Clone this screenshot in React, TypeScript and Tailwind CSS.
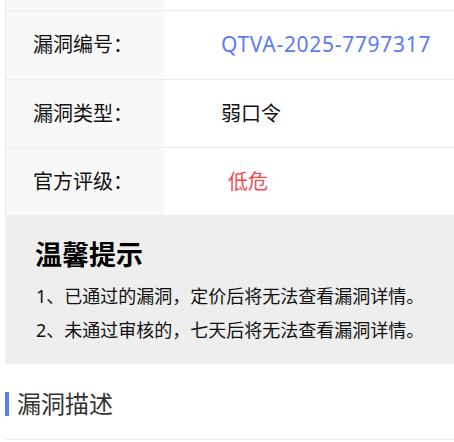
import React from "react";

const Row = ({ label, children, first }: { label: string; children: React.ReactNode; first?: boolean }) => (
  <div className={`flex border-t border-[#ececec] ${first ? "h-[69px]" : "h-[68px]"}`}>
    <div className="w-[158px] shrink-0 bg-[#f8f8f8] flex items-center pl-[27px] text-[20px] text-[#111]">
      {label}
    </div>
    <div className="flex-1 flex items-center pl-[57px] text-[20px]">{children}</div>
  </div>
);

export default function App() {
  return (
    <div className="w-[454px] h-[442px] bg-white pl-[5px] overflow-hidden font-['Noto_Sans','Noto_Sans_CJK_SC',sans-serif]">
      <div className="border-l border-[#ececec]">
        <div className="flex h-[10px]">
          <div className="w-[158px] bg-[#f8f8f8]" />
          <div className="flex-1" />
        </div>
        <Row label="漏洞编号：" first>
          <span className="text-[#5b7bf7] text-[21px] tracking-[0.7px]">QTVA-2025-7797317</span>
        </Row>
        <Row label="漏洞类型：">
          <span className="text-[#111]">弱口令</span>
        </Row>
        <Row label="官方评级：">
          <span className="text-[#f5484f] ml-[7px]">低危</span>
        </Row>
      </div>
      <div className="bg-[#eeeeee] pt-[23px] pb-[17px] pl-[30px]">
        <div className="text-[27px] leading-[34px] font-bold text-black">温馨提示</div>
        <div className="mt-[7px] pl-[1px] text-[18px] leading-[34px] text-[#111]">1、已通过的漏洞，定价后将无法查看漏洞详情。</div>
        <div className="pl-[1px] text-[18px] leading-[34px] text-[#111]">2、未通过审核的，七天后将无法查看漏洞详情。</div>
      </div>
      <div className="pt-[28px] pb-[23px] border-b border-[#ececec] flex items-center">
        <div className="w-[4px] h-[24px] bg-[#5b7bf7]" />
        <div className="ml-[8px] text-[24px] leading-[24px] text-[#333]">漏洞描述</div>
      </div>
    </div>
  );
}
